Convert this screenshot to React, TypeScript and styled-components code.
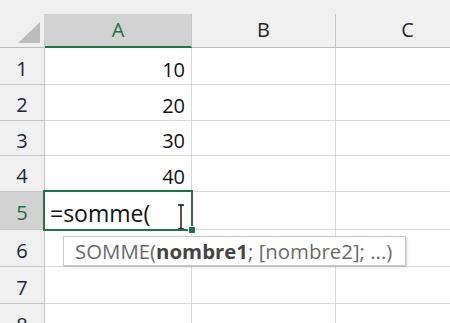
import styled, { createGlobalStyle } from 'styled-components';

const GlobalStyle = createGlobalStyle`
  html, body {
    margin: 0;
    padding: 0;
    background: #ffffff;
    overflow: hidden;
  }
`

const GREEN = '#217346';

const Sheet = styled.div`
  width: 450px;
  height: 323px;
  overflow: hidden;
  font-family: "Open Sans", sans-serif;
  color: #222;
`

const HeaderRow = styled.div`
  display: flex;
  height: 48px;
  padding-top: 14px;
  box-sizing: border-box;
  background: #f0f0f0;
`

const Corner = styled.div`
  width: 45px;
  flex: none;
  display: flex;
  align-items: flex-end;
  justify-content: flex-end;
  padding: 0 4px 4px 0;
  box-sizing: border-box;
  border-right: 1px solid #d0d0d0;
  border-bottom: 1px solid #bdbdbd;
`

const ColHeader = styled.div<{ $w: number; $active?: boolean }>`
  width: ${p => p.$w}px;
  flex: none;
  box-sizing: border-box;
  display: flex;
  align-items: center;
  justify-content: center;
  font-size: 20px;
  padding-bottom: 2px;
  color: ${p => (p.$active ? GREEN : '#262626')};
  background: ${p => (p.$active ? '#d2d2d2' : 'transparent')};
  border-right: 1px solid #c6c6c6;
  border-bottom: ${p => (p.$active ? `2px solid ${GREEN}` : '1px solid #bdbdbd')};
`

const Row = styled.div<{ $h: number }>`
  display: flex;
  height: ${p => p.$h}px;
`

const RowHeader = styled.div<{ $active?: boolean }>`
  width: 45px;
  flex: none;
  box-sizing: border-box;
  display: flex;
  align-items: center;
  justify-content: center;
  padding-top: 4px;
  font-size: 20px;
  color: ${p => (p.$active ? GREEN : '#1b2636')};
  background: ${p => (p.$active ? '#d2d2d2' : '#f0f0f0')};
  border-right: 1px solid #c6c6c6;
  border-bottom: 1px solid #c6c6c6;
`

const Cell = styled.div<{ $w: number }>`
  position: relative;
  width: ${p => p.$w}px;
  flex: none;
  box-sizing: border-box;
  display: flex;
  align-items: flex-end;
  justify-content: flex-end;
  padding: 0 6px 1px 4px;
  font-size: 20px;
  color: #111;
  border-right: 1px solid #d9d9d9;
  border-bottom: 1px solid #d9d9d9;
`

const ActiveCell = styled(Cell)`
  justify-content: flex-start;
  font-size: 23px;
  padding-left: 5px;
  padding-bottom: 0;
  z-index: 2;

  &::after {
    content: '';
    position: absolute;
    left: -2px;
    top: -2px;
    right: -2px;
    bottom: -2px;
    border: 2px solid ${GREEN};
    pointer-events: none;
  }
`

const FillHandle = styled.span`
  position: absolute;
  right: -5px;
  bottom: -5px;
  width: 6px;
  height: 6px;
  background: ${GREEN};
  border: 1px solid #fff;
  z-index: 3;
`

const Cursor = styled.svg`
  position: absolute;
  right: 6px;
  bottom: -1px;
`

const Tooltip = styled.div`
  position: absolute;
  left: 18px;
  top: 44px;
  height: 30px;
  box-sizing: border-box;
  padding: 0 13px 0 11px;
  display: flex;
  align-items: center;
  white-space: nowrap;
  font-size: 20.4px;
  color: #6a6a6a;
  background: #fff;
  border: 1px solid #c8c8c8;
  box-shadow: 1px 1px 2px rgba(0, 0, 0, 0.18);
  z-index: 4;

  b {
    color: #444;
    font-weight: 700;
  }
`

const widths = [147, 144, 144];
const heights = [37, 36, 35, 36, 38, 37, 37, 37];
const values: Record<number, string> = { 1: '10', 2: '20', 3: '30', 4: '40' };

export default function App() {
  return (
    <>
      <GlobalStyle />
      <Sheet>
        <HeaderRow>
          <Corner>
            <svg width="22" height="21" viewBox="0 0 22 21">
              <polygon points="22,0 22,21 0,21" fill="#bcbcbc" />
            </svg>
          </Corner>
          <ColHeader $w={widths[0]} $active>A</ColHeader>
          <ColHeader $w={widths[1]}>B</ColHeader>
          <ColHeader $w={widths[2]}>C</ColHeader>
        </HeaderRow>
        {heights.map((h, i) => {
          const n = i + 1;
          const active = n === 5;
          return (
            <Row key={n} $h={h}>
              <RowHeader $active={active}>{n}</RowHeader>
              {active ? (
                <ActiveCell $w={widths[0]}>
                  =somme(
                  <Cursor width="8" height="26" viewBox="0 0 8 26">
                    <path d="M1 1h2.5L4 2l.5-1H7M4 2v22M1 25h2.5L4 24l.5 1H7" stroke="#111" strokeWidth="1.4" fill="none" />
                  </Cursor>
                  <FillHandle />
                  <Tooltip>
                    SOMME(<b>nombre1</b>; [nombre2]; ...)
                  </Tooltip>
                </ActiveCell>
              ) : (
                <Cell $w={widths[0]}>{values[n] ?? ''}</Cell>
              )}
              <Cell $w={widths[1]} />
              <Cell $w={widths[2]} />
            </Row>
          );
        })}
      </Sheet>
    </>
  );
}
